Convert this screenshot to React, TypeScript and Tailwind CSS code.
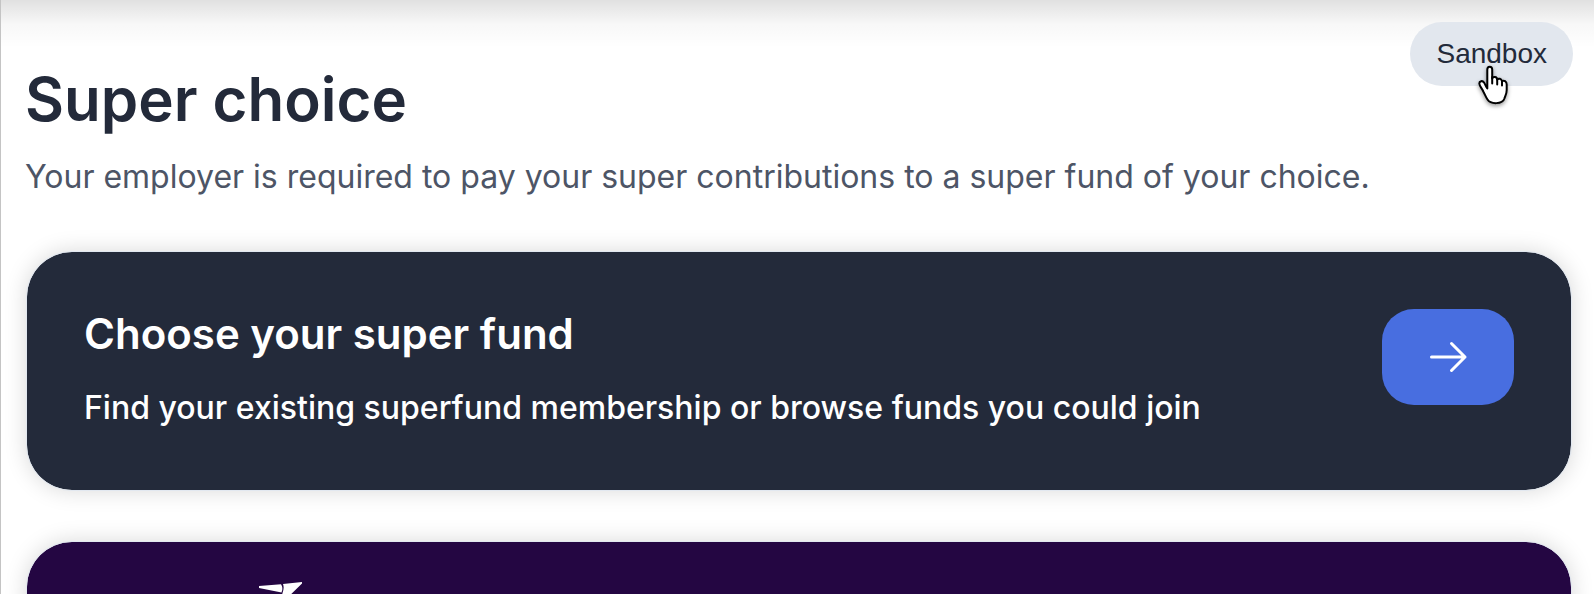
function ArrowIcon() {
  return (
    <svg className="w-10 h-10" viewBox="0 0 40 40" fill="none" stroke="currentColor" strokeWidth="3" strokeLinecap="round" strokeLinejoin="round" aria-hidden="true">
      <path d="M3.5 20H37M23.5 6.5L37 20L23.5 33.5" />
    </svg>
  );
}

function PointerCursor() {
  return (
    <svg
      className="absolute left-[66px] top-[42px] w-9 h-[42px] pointer-events-none drop-shadow-[0_2px_2px_rgba(0,0,0,0.4)]"
      viewBox="0 0 36 42"
      fill="#ffffff"
      stroke="#000000"
      strokeWidth="2"
      strokeLinecap="round"
      strokeLinejoin="round"
      aria-hidden="true"
    >
      <path d="M11.3 24.5V5.500C11.3 1.7 16.2 1.7 16.2 5.5V14.5C17 12.3 21 12.5 21.2 15.5C22.5 14 25.5 14.5 26 17.2C28 16 30.7 17.3 30.7 20.5V26C30.7 30 29.2 31.5 28.4 34.5C26.5 40.5 14.5 40.5 11.5 35.5C9.5 32.5 9 30.5 7.3 27.5C6 24.5 3.5 22 3.3 19.5C3.3 17 6.5 16.2 8 18.5C9.3 20.5 10 22.8 11.3 24.5Z" />
      <path d="M16.2 13V19.5M21.2 15V20.5M26 17V21.5" fill="none" />
    </svg>
  );
}

function FundLogo() {
  return (
    <svg className="w-12 h-12" viewBox="0 0 48 48" fill="#ffffff" aria-hidden="true">
      <path d="M1 4L23 2.3Q25.5 6 23.5 10.5L1 6Z" />
      <path d="M25 2L44 0V1.5L22 23L24.5 11Q26.5 6 25 2Z" />
    </svg>
  );
}

export default function App() {
  return (
    <main className="relative h-screen overflow-hidden border-l border-[#c4c4c4] bg-white pl-[25px] pr-[22px] pt-[67px] font-['Inter',sans-serif] text-[#232a3a]">
      {/* Shadow cast by the header above */}
      <div className="absolute inset-x-0 top-0 h-12 bg-gradient-to-b from-black/12 via-black/3 to-transparent" />

      <div className="absolute right-[21px] top-[22px]">
        <button type="button" className="h-16 rounded-full bg-[#e2e7ee] px-[26px] font-['Liberation_Sans',sans-serif] text-[28px]">
          Sandbox
        </button>
        <PointerCursor />
      </div>

      <header className="-ml-px mb-[49px]">
        <h1 className="text-[60px] leading-[64px] font-semibold">Super choice</h1>
        <p className="mt-[21px] text-[32px] leading-[50px] text-[#4d5566]">
          Your employer is required to pay your super contributions to a super fund of your choice.
        </p>
      </header>

      <div className="flex flex-col gap-[50px]">
        <section className="flex items-start justify-between rounded-[46px] border border-[#e2e8f0] bg-[#232a3a] bg-clip-padding p-[57px] text-white shadow-[0_0_22px_rgba(0,0,0,0.15)]">
          <div>
            <h2 className="text-[42px] leading-[50px] font-semibold">Choose your super fund</h2>
            <p className="mt-6 text-[32px] leading-[50px] font-medium">
              Find your existing superfund membership or browse funds you could join
            </p>
          </div>
          <button type="button" aria-label="Choose fund" className="flex h-24 w-[132px] shrink-0 items-center justify-center rounded-[32px] bg-[#486ee0]">
            <ArrowIcon />
          </button>
        </section>

        <section className="min-h-60 rounded-[46px] border border-[#e2e8f0] bg-[#240642] bg-clip-padding pl-[231px] pt-10 shadow-[0_0_22px_rgba(0,0,0,0.15)]">
          <FundLogo />
        </section>
      </div>
    </main>
  );
}
